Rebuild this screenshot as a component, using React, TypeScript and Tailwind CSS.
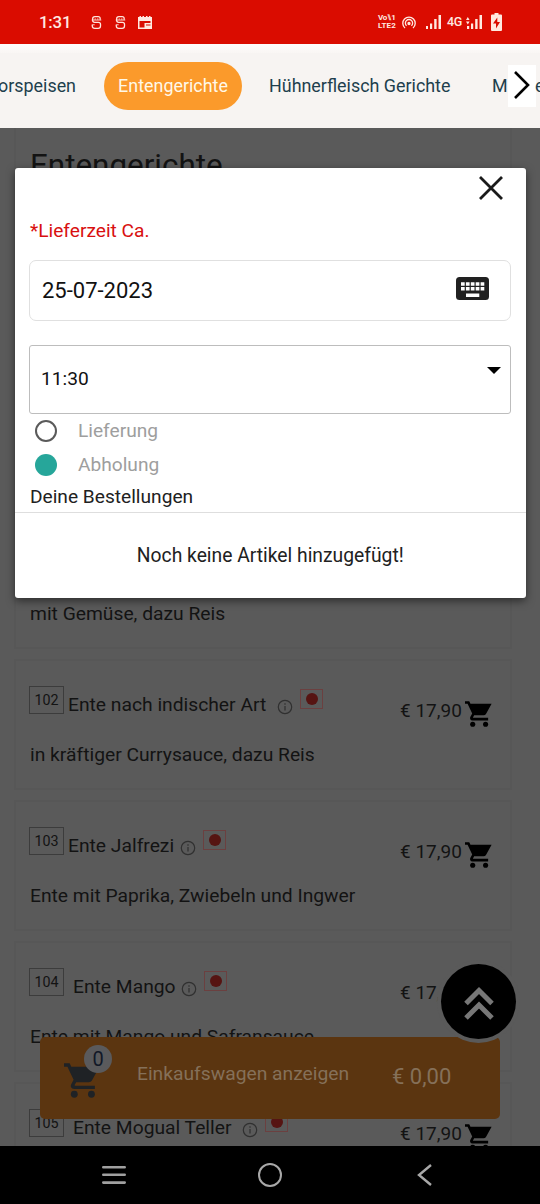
import React from "react";

function Cart({ className }: { className: string }) {
  return (
    <svg viewBox="1 2 21 20" className={className} fill="currentColor">
      <path d="M1 2H4.300L5.250 4H21.700L17.300 12Q16.700 13 15.500 13H8.100L7.200 14.650Q7.100 15 7.500 15H19V17H7Q5.500 17 5 15.800Q4.800 14.800 5.300 14L6.600 11.600L3 4H1Z" />
      <circle cx="7" cy="20" r="2" />
      <circle cx="17" cy="20" r="2" />
    </svg>
  );
}

function SIcon({ className }: { className: string }) {
  return (
    <svg viewBox="0 0 12 15" className={className} fill="none" stroke="#ffe6dc" strokeWidth="1.4">
      <path d="M10 4.600V3.200Q10 1 7.800 1H4.200Q1.800 1 1.800 3.400V5.400Q1.800 7.300 4 7.300H8Q10.400 7.300 10.400 9.600V11Q10.400 13.800 7.800 13.800H4Q1.400 13.800 1.400 11.400V10.200" />
      <path d="M0.800 4.800H11.200M0.800 10H4" strokeWidth="1" />
      <path d="M4.600 3V4.400M7.400 3V4.400" strokeWidth="1" />
    </svg>
  );
}

function StatusBar() {
  return (
    <header className="flex h-[44px] shrink-0 items-center bg-[#da0c00] text-[#ffe9e0]">
      <span className="ml-[39px] w-[52px] shrink-0 text-[16.800px] font-medium leading-none tracking-[-0.2px]">1:31</span>
      <SIcon className="h-[15px] w-[11px] shrink-0" />
      <SIcon className="ml-[13px] h-[15px] w-[11px] shrink-0" />
      <svg viewBox="0 0 14 13" className="ml-[12px] mt-px h-[13px] w-[14px] shrink-0">
        <path fill="#ffe9e0" fillRule="evenodd" d="M0 1H1.500V0H3V1H4.500V0H6V1H8V0H9.500V1H11V0H12.500V1H14V13H0ZM1.500 5V11.500H6.500V5ZM6.500 5V7H12.500V5ZM8 8.500V9.500H12.500V8.500Z" />
      </svg>
      <div className="ml-[226px] flex w-[19px] shrink-0 flex-col text-[8px] font-bold leading-[8px]">
        <span className="whitespace-nowrap tracking-[-0.4px]">Vo⑊1</span>
        <span className="whitespace-nowrap tracking-[0.1px]">LTE2</span>
      </div>
      <svg viewBox="0 0 14 13" className="ml-[5px] h-[13px] w-[14px] shrink-0" fill="none" stroke="#ffe9e0" strokeWidth="1.300">
        <path d="M3 12A6.200 6.200 0 1 1 11 12M4.600 9.800A3.600 3.600 0 1 1 9.400 9.800" />
        <circle cx="7" cy="7.500" r="1" fill="#ffe9e0" />
      </svg>
      <svg viewBox="0 0 15 14" className="ml-[10px] h-[14px] w-[15px] shrink-0" fill="#ffe9e0">
        <path d="M0 11h2v3H0zM4 8.500h2.200V14H4zM8.200 4h2.400v10h-2.400zM12.500 0h2.500v14h-2.500z" />
      </svg>
      <span className="ml-[6px] w-[15px] shrink-0 whitespace-nowrap text-[12.500px] font-medium leading-none tracking-[-0.4px]">4G</span>
      <svg viewBox="0 0 16 14" className="ml-[4px] h-[14px] w-[16px] shrink-0" fill="#ffe9e0">
        <path d="M0 5L1.800 2L3.600 5zM0 6.500H3.600L1.800 9.500zM1 11h2.200v3H1zM5 8.500h2.200V14H5zM9.200 4h2.400v10h-2.400zM13.500 0H16v14h-2.500z" />
      </svg>
      <svg viewBox="0 0 11 18" className="ml-[9px] h-[18px] w-[11px] shrink-0">
        <path d="M3.500 0h4v1.500H10Q11 1.500 11 2.500V17Q11 18 10 18H1Q0 18 0 17V2.500Q0 1.500 1 1.500H3.500z" fill="#ffe9e0" />
        <path d="M6.300 4.500L2 10.500H5V15.500L9 9H6.300z" fill="#da0c00" />
      </svg>
    </header>
  );
}

function CategoryNav() {
  return (
    <nav className="h-[84px] shrink-0 overflow-hidden bg-[#f7f4f2] text-[17.900px] text-[#1e3f4d]">
      <div className="h-[9px] bg-linear-to-b from-[#fefcfb] to-[#f9f6f4]" />
      <div className="mt-[9px] flex h-[48px] items-center whitespace-nowrap">
        <span className="flex w-[76px] shrink-0 justify-end pt-px">orspeisen</span>
        <span className="ml-[28px] flex h-[48px] w-[138px] shrink-0 items-center justify-center rounded-full bg-[#fb9a2b] pt-px text-[#fff8e8]">
          Entengerichte
        </span>
        <span className="ml-[27px] w-[223px] shrink-0 pt-px">Hühnerfleisch Gerichte</span>
        <span className="w-[16px] shrink-0 pt-px">M</span>
        <span className="flex h-[42px] w-[28px] shrink-0 items-center justify-center bg-white">
          <svg viewBox="0 0 16 28" className="mb-[2px] h-[28px] w-[16px]" fill="none" stroke="#000" strokeWidth="2.600">
            <path d="M1 1L14 14L1 27" />
          </svg>
        </span>
        <span className="-ml-px shrink-0 pt-px">e</span>
      </div>
    </nav>
  );
}

type Dish = { no: string; name: string; desc: string; nameClass: string };

const dishes: Dish[] = [
  { no: "102", name: "Ente nach indischer Art", desc: "in kräftiger Currysauce, dazu Reis", nameClass: "ml-[4px] w-[210px]" },
  { no: "103", name: "Ente Jalfrezi", desc: "Ente mit Paprika, Zwiebeln und Ingwer", nameClass: "ml-[4px] w-[113px]" },
  { no: "104", name: "Ente Mango", desc: "Ente mit Mango und Safransauce", nameClass: "ml-[9px] w-[109px]" },
  { no: "105", name: "Ente Mogual Teller", desc: "", nameClass: "ml-[9px] w-[170px]" },
];

function DishCard({ dish }: { dish: Dish }) {
  return (
    <article className="flex h-[131px] shrink-0 flex-col border-2 border-[#575757] pl-[13px] pt-[25px]">
      <div className="flex h-[44px] items-start">
        <span className="flex h-[28px] w-[35px] shrink-0 items-center justify-center border border-[#3c3c3c] text-[14.300px] leading-none">
          {dish.no}
        </span>
        <span className={`mt-[7px] shrink-0 whitespace-nowrap leading-[24px] ${dish.nameClass}`}>{dish.name}</span>
        <svg viewBox="0 0 16 16" className="-ml-px mt-[13px] h-[16px] w-[16px] shrink-0" fill="none" stroke="#303030" strokeWidth="1.200">
          <circle cx="8" cy="8" r="6.700" />
          <path d="M8 7v4.500M8 4.300v1.500" />
        </svg>
        <span className="ml-[7px] mt-[3px] flex h-[20px] w-[23px] shrink-0 items-center justify-center border border-[#6b4040]">
          <span className="size-[12px] rounded-full bg-[#561412]" />
        </span>
        <span className="ml-auto mt-[13px] w-[65px] whitespace-nowrap text-[19px] leading-[24px]">€ 17,90</span>
        <Cart className="mr-[18px] mt-[15px] h-[26px] w-[27px] shrink-0 text-black" />
      </div>
      <p className="mt-[13px] whitespace-nowrap pl-px leading-[24px]">{dish.desc}</p>
    </article>
  );
}

function OrderDialog() {
  return (
    <section className="absolute left-[15px] top-[168px] flex h-[430px] w-[510.500px] flex-col rounded-[3px] bg-white text-[19.150px] text-[#212121] shadow-[0_3px_8px_rgba(0,0,0,0.5)]">
      <div className="flex h-[42px] justify-end pr-[23px] pt-[8px]">
        <svg viewBox="0 0 24 24" className="size-[24px]" stroke="#1a1a1a" strokeWidth="2.800">
          <path d="M1 1L23 23M23 1L1 23" />
        </svg>
      </div>
      <p className="ml-[15px] mt-[8px] leading-[26px] text-[#d81010]">*Lieferzeit Ca.</p>
      <div className="ml-[14px] mt-[16px] flex h-[61px] w-[482px] items-center rounded-[7px] border border-[#e0e0e0] pl-[12px] pr-[21px] text-[22px] text-[#111]">
        <span className="mb-px flex-1">25-07-2023</span>
        <svg viewBox="0 0 33 23" className="mb-[4px] h-[23px] w-[33px]">
          <rect width="33" height="23" rx="3.500" fill="#212121" />
          <path
            fill="#fff"
            d="M5 5.300h3.700v3.400H5zM9.900 5.300h3.700v3.400H9.900zM14.800 5.300h3.700v3.400h-3.700zM19.700 5.300h3.700v3.400h-3.700zM24.600 5.300h3.700v3.400h-3.700zM5 10h3.700v3.400H5zM9.900 10h3.700v3.400H9.900zM14.800 10h3.700v3.400h-3.700zM19.700 10h3.700v3.400h-3.700zM24.600 10h3.700v3.400h-3.700zM10 16.500h13.300V20H10z"
          />
        </svg>
      </div>
      <div className="ml-[14px] mt-[24px] flex h-[69px] w-[482px] items-center rounded-[3px] border border-[#bdbdbd] pl-[11px] pr-[9px] text-[#111]">
        <span className="flex-1">11:30</span>
        <svg viewBox="0 0 14 7" className="mb-[18px] h-[7px] w-[14px]">
          <path d="M0 0h14L7 7z" fill="#000" />
        </svg>
      </div>
      <div className="flex h-[34px] items-center pl-[20px] text-[#9e9e9e]">
        <span className="mb-px mr-[21px] size-[22px] rounded-full border-2 border-[#5a5a5a]" />
        Lieferung
      </div>
      <div className="flex h-[34px] items-center pl-[20px] text-[#9e9e9e]">
        <span className="mb-px mr-[21px] size-[22px] rounded-full bg-[#26a69a]" />
        Abholung
      </div>
      <p className="h-[31px] border-b border-[#dedede] pl-[15px] leading-[30px]">Deine Bestellungen</p>
      <p className="flex flex-1 items-center justify-center pt-px text-[19.300px]">Noch keine Artikel hinzugefügt!</p>
    </section>
  );
}

function CartBar() {
  return (
    <div className="absolute left-[40px] top-[1037px] flex h-[82px] w-[460px] items-center rounded-[5px] bg-[#5b3510] text-[#857059]">
      <div className="relative ml-[24px] mt-[5px] w-[73px] text-[#1f2225]">
        <Cart className="h-[35px] w-[36px]" />
        <span className="absolute left-[20px] top-[-18px] flex size-[28px] items-center justify-center rounded-full bg-[#5a5a5c] text-[20px] leading-none text-[#111827]">
          0
        </span>
      </div>
      <span className="mb-[7px] w-[255px] whitespace-nowrap text-[19.250px]">Einkaufswagen anzeigen</span>
      <span className="mb-[4px] whitespace-nowrap text-[22px]">€ 0,00</span>
    </div>
  );
}

function SystemNav() {
  return (
    <footer className="flex h-[58px] shrink-0 items-center bg-black pl-[102px]">
      <svg viewBox="0 0 24 20" className="h-[20px] w-[24px]" stroke="#a0a0a0" strokeWidth="2.600" strokeLinecap="round">
        <path d="M1.300 2.200H22.700M1.300 9.800H22.700M1.300 17.600H22.700" />
      </svg>
      <span className="ml-[132px] size-[24px] rounded-full border-[2.500px] border-[#a8a8a8]" />
      <svg viewBox="0 0 15 22" className="ml-[135px] h-[22px] w-[15px]" fill="none" stroke="#a8a8a8" strokeWidth="2.400">
        <path d="M14 1L2 11L14 21" />
      </svg>
    </footer>
  );
}

export default function App() {
  return (
    <div className="relative flex h-[1204px] w-[540px] flex-col overflow-hidden font-['Roboto',sans-serif]">
      <StatusBar />
      <CategoryNav />
      <main className="flex h-[1018px] shrink-0 flex-col gap-[10px] overflow-hidden bg-[#5a5a5a] pl-[14px] pr-[28px] text-[19.250px] text-[#131313]">
        <section className="flex h-[521px] shrink-0 flex-col justify-between border-x-2 border-b-2 border-[#575757] px-[14px] pb-[21px] pt-[18px]">
          <h1 className="text-[31.400px] leading-[40px]">Entengerichte</h1>
          <p className="leading-[24px]">mit Gemüse, dazu Reis</p>
        </section>
        {dishes.map((dish) => (
          <DishCard key={dish.no} dish={dish} />
        ))}
      </main>
      <SystemNav />
      <CartBar />
      <div className="absolute left-[441px] top-[964px] flex size-[75px] items-center justify-center rounded-full bg-black shadow-[0_0_0_4px_#5a5a5a]">
        <svg viewBox="0 0 30 34" className="mt-[3px] h-[34px] w-[30px]" fill="none" stroke="#777" strokeWidth="5">
          <path d="M2 17.500L15 4.500L28 17.500M2 32L15 19L28 32" />
        </svg>
      </div>
      <OrderDialog />
    </div>
  );
}
